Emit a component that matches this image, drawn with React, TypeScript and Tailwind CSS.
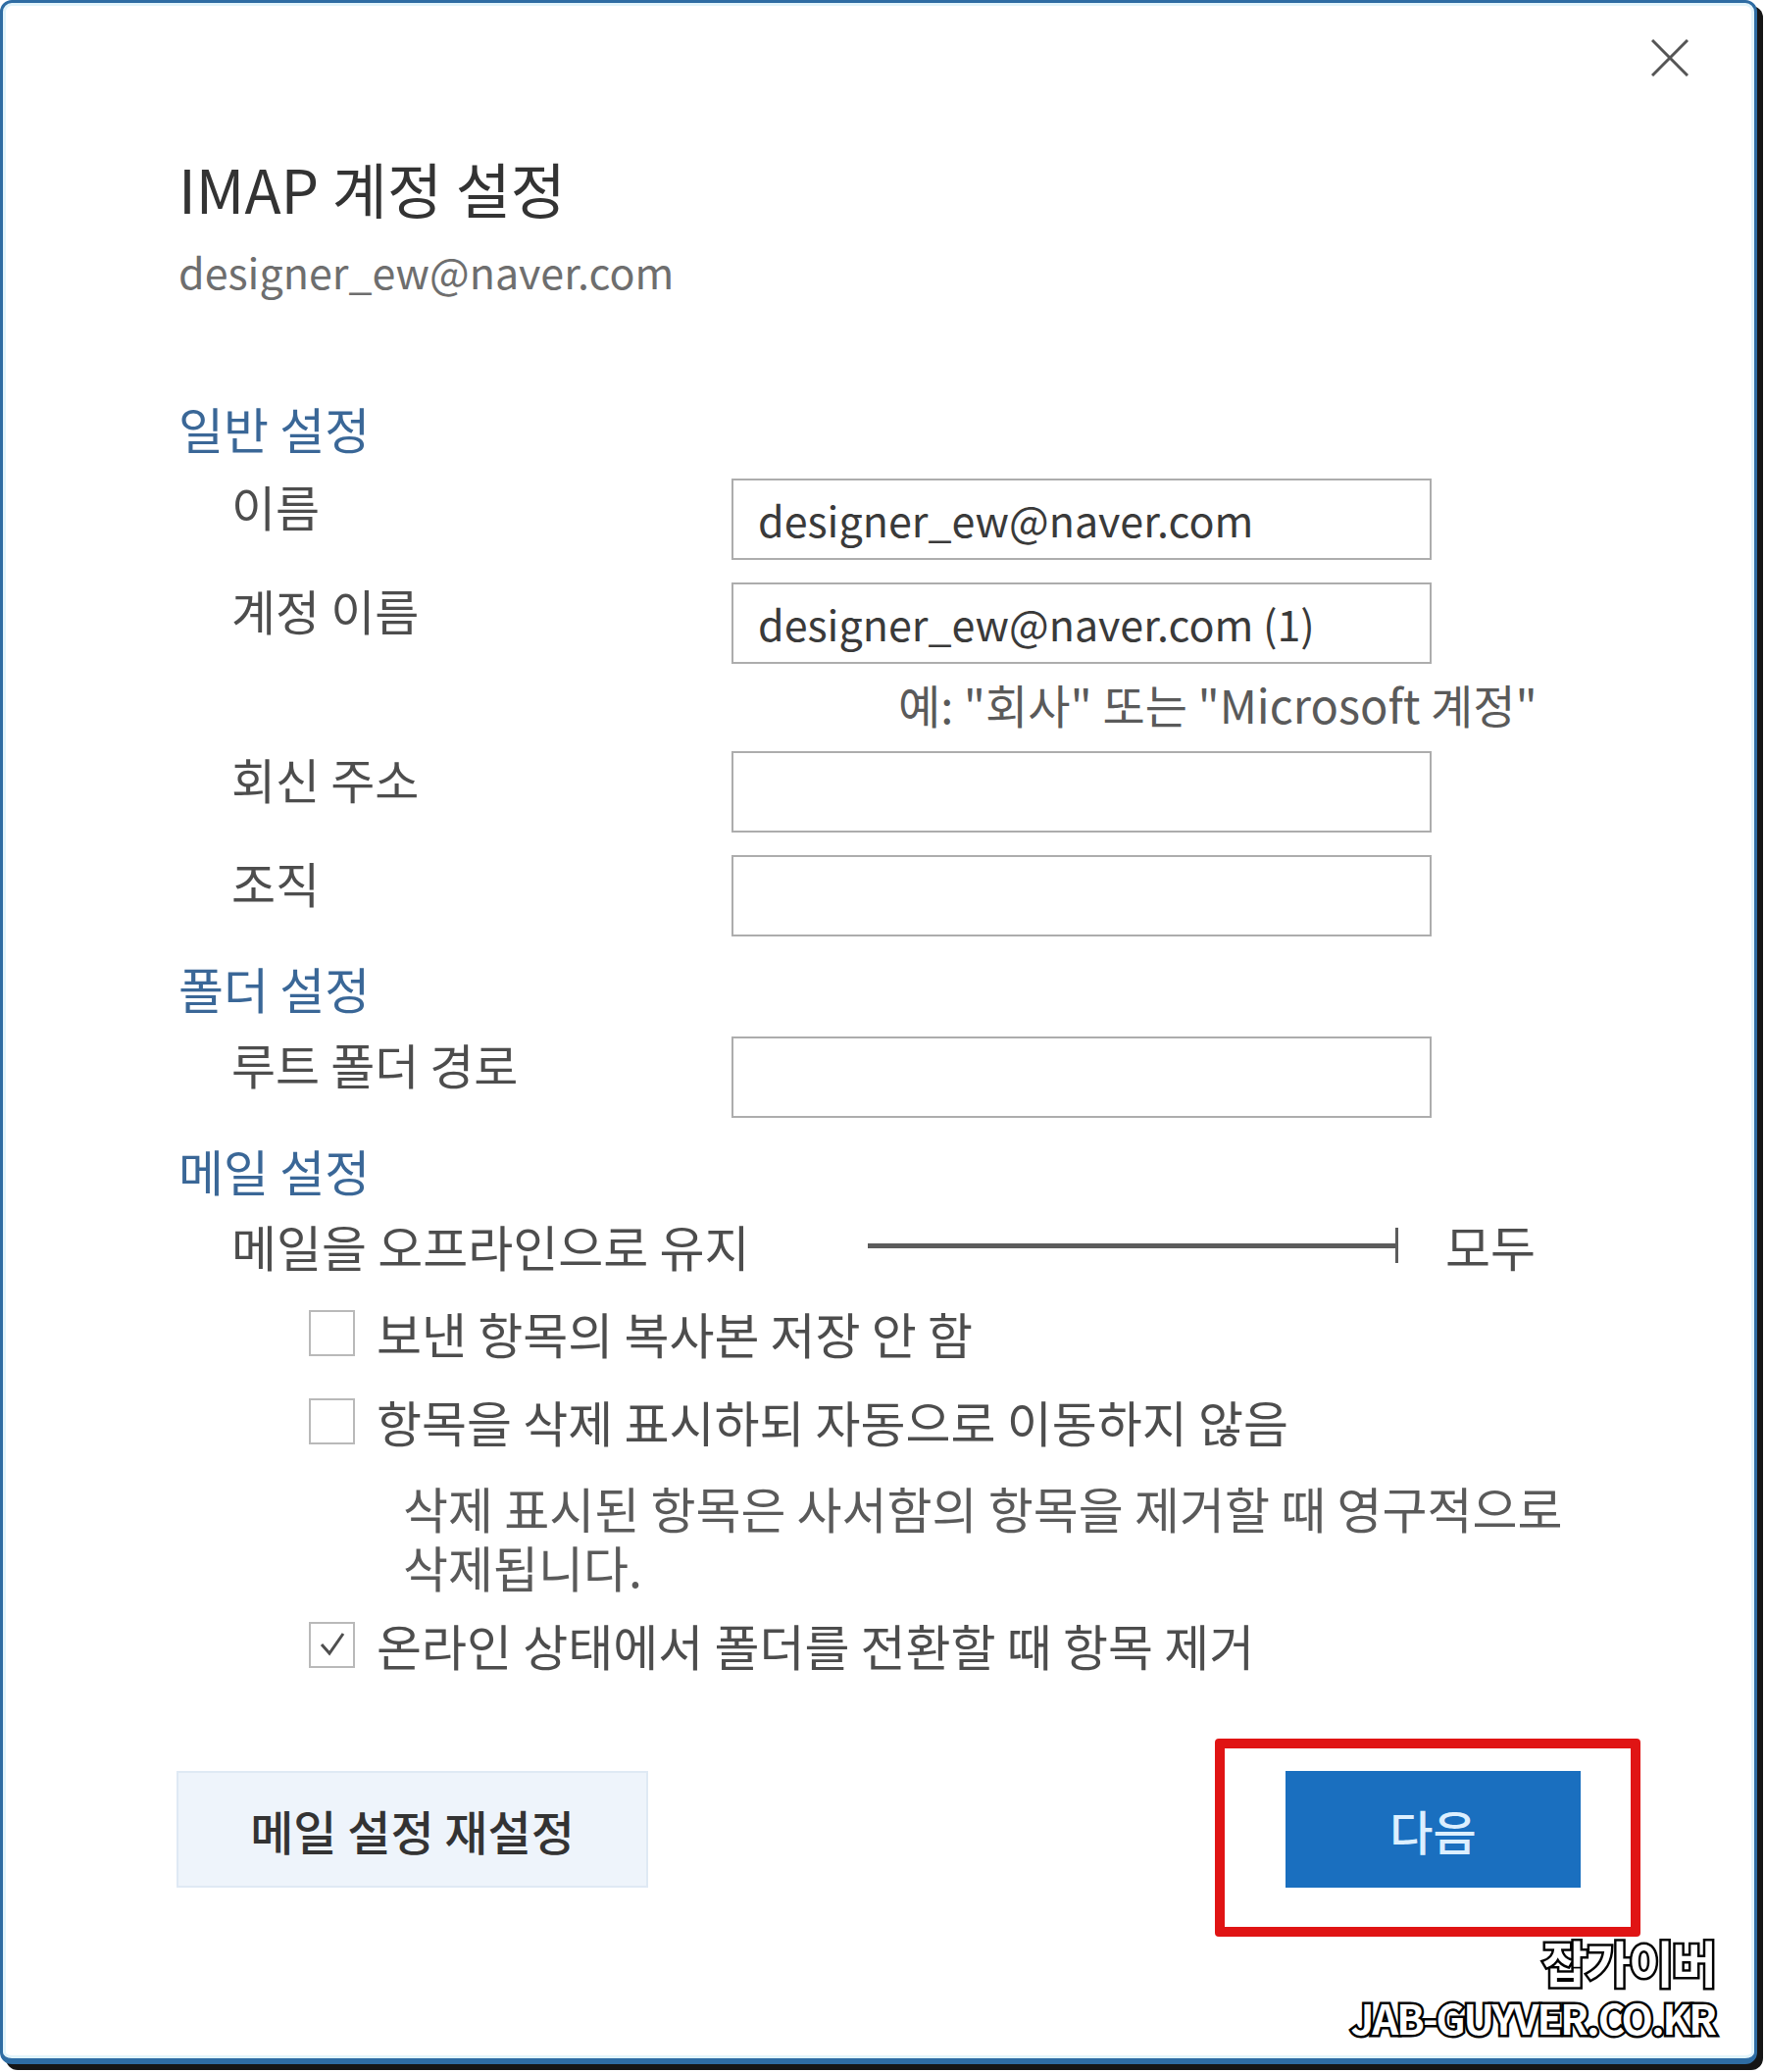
import React from 'react';

const labelCls = 'w-[564px] shrink-0 pl-[54px] text-[49px] leading-[56px] text-[#4d4d4d]';
const headingCls = 'text-[50px] leading-[56px] text-[#3a6797]';

const Field: React.FC<{ label: string; value?: string; className?: string }> = ({ label, value, className }) => (
    <div className={`flex items-start ${className ?? ''}`}>
        <div className={labelCls}>{label}</div>
        <div className="w-[714px] h-[83px] border-2 border-[#adadad] bg-white flex items-center pl-[25px] text-[43px] text-[#3a3a3a]">
            {value}
        </div>
    </div>
);

const Checkbox: React.FC<{ checked?: boolean; label: string; className?: string }> = ({ checked, label, className }) => (
    <div className={`flex items-center h-[56px] pl-[133px] ${className ?? ''}`}>
        <div className="w-[47px] h-[47px] border-2 border-[#b9b9b9] bg-white flex items-center justify-center shrink-0">
            {checked && (
                <svg width="32" height="32" viewBox="0 0 32 32" fill="none">
                    <polyline points="5,16 13,25 27,5" stroke="#4f4f4f" strokeWidth="3" />
                </svg>
            )}
        </div>
        <span className="ml-[22px] text-[50px] leading-[56px] text-[#4d4d4d]">{label}</span>
    </div>
);

const App: React.FC = () => {
    return (
        <div className="w-[1800px] h-[2113px] bg-white font-['Noto_Sans_CJK_KR','Noto_Sans',sans-serif]">
            <div className="relative w-[1792px] h-[2105px] rounded-[12px] border-[3px] border-b-[6px] border-[#2e6ca3] bg-white shadow-[6px_6px_0_#151515,inset_0_0_0_3px_#e2f4fb]">
                {/* close */}
                <div className="flex justify-end pt-[37px] pr-[67px]">
                    <svg width="38" height="38" viewBox="0 0 38 38">
                        <line x1="1" y1="1" x2="37" y2="37" stroke="#555" strokeWidth="3" />
                        <line x1="37" y1="1" x2="1" y2="37" stroke="#555" strokeWidth="3" />
                    </svg>
                </div>

                <div className="pl-[179px]">
                    <h1 className="mt-[79px] text-[61px] leading-[70px] text-[#333333]">IMAP 계정 설정</h1>
                    <p className="mt-[21px] text-[43px] leading-[56px] text-[#6e6e6e]">designer_ew@naver.com</p>

                    {/* General */}
                    <h2 className={`mt-[104px] ${headingCls}`}>일반 설정</h2>
                    <Field className="mt-[24px]" label="이름" value="designer_ew@naver.com" />
                    <Field className="mt-[23px]" label="계정 이름" value="designer_ew@naver.com (1)" />
                    <p className="mt-[13px] ml-[734px] text-[47px] leading-[56px] text-[#5a5a5a]">
                        예: "회사" 또는 "Microsoft 계정"
                    </p>
                    <Field className="mt-[20px]" label="회신 주소" />
                    <Field className="mt-[23px]" label="조직" />

                    {/* Folder */}
                    <h2 className={`mt-[24px] ${headingCls}`}>폴더 설정</h2>
                    <Field className="mt-[22px]" label="루트 폴더 경로" />

                    {/* Mail */}
                    <h2 className={`mt-[25px] ${headingCls}`}>메일 설정</h2>
                    <div className="mt-[21px] flex items-center h-[56px] pl-[54px]">
                        <span className="w-[649px] shrink-0 text-[50px] leading-[56px] text-[#4d4d4d]">메일을 오프라인으로 유지</span>
                        <div className="w-[538px] h-[5px] bg-[#5c5c5c]" />
                        <div className="w-[3px] h-[36px] bg-[#5c5c5c]" />
                        <span className="ml-[48px] text-[50px] leading-[56px] text-[#4d4d4d]">모두</span>
                    </div>

                    <Checkbox className="mt-[33px]" label="보낸 항목의 복사본 저장 안 함" />
                    <Checkbox className="mt-[34px]" label="항목을 삭제 표시하되 자동으로 이동하지 않음" />
                    <p className="mt-[30px] ml-[229px] text-[50px] leading-[60px] text-[#5a5a5a]">
                        삭제 표시된 항목은 사서함의 항목을 제거할 때 영구적으로
                        <br />
                        삭제됩니다.
                    </p>
                    <Checkbox className="mt-[22px]" checked label="온라인 상태에서 폴더를 전환할 때 항목 제거" />

                    {/* Buttons */}
                    <div className="mt-[101px] flex items-center gap-[650px] -ml-[2px]">
                        <button className="w-[481px] h-[119px] bg-[#eef4fb] border-2 border-[#dfe9f4] text-[48px] font-medium text-[#333333]">
                            메일 설정 재설정
                        </button>
                        <button className="w-[301px] h-[119px] bg-[#1a6fbf] text-[48px] font-medium text-[#dcefff]">
                            다음
                        </button>
                    </div>
                </div>

                {/* annotation */}
                <div className="absolute left-[1236px] top-[1770px] w-[434px] h-[202px] border-[10px] border-[#e01414] rounded-[4px]" />

                {/* watermark */}
                <div className="absolute right-[40px] top-[1966px] flex flex-col items-end font-bold text-white [-webkit-text-stroke:5px_#000] [paint-order:stroke_fill]">
                    <span className="text-[50px] leading-[62px] tracking-[-2px]">잡가이버</span>
                    <span className="text-[42px] leading-[52px] tracking-[-2px]">JAB-GUYVER.CO.KR</span>
                </div>
            </div>
        </div>
    );
};

export default App;
